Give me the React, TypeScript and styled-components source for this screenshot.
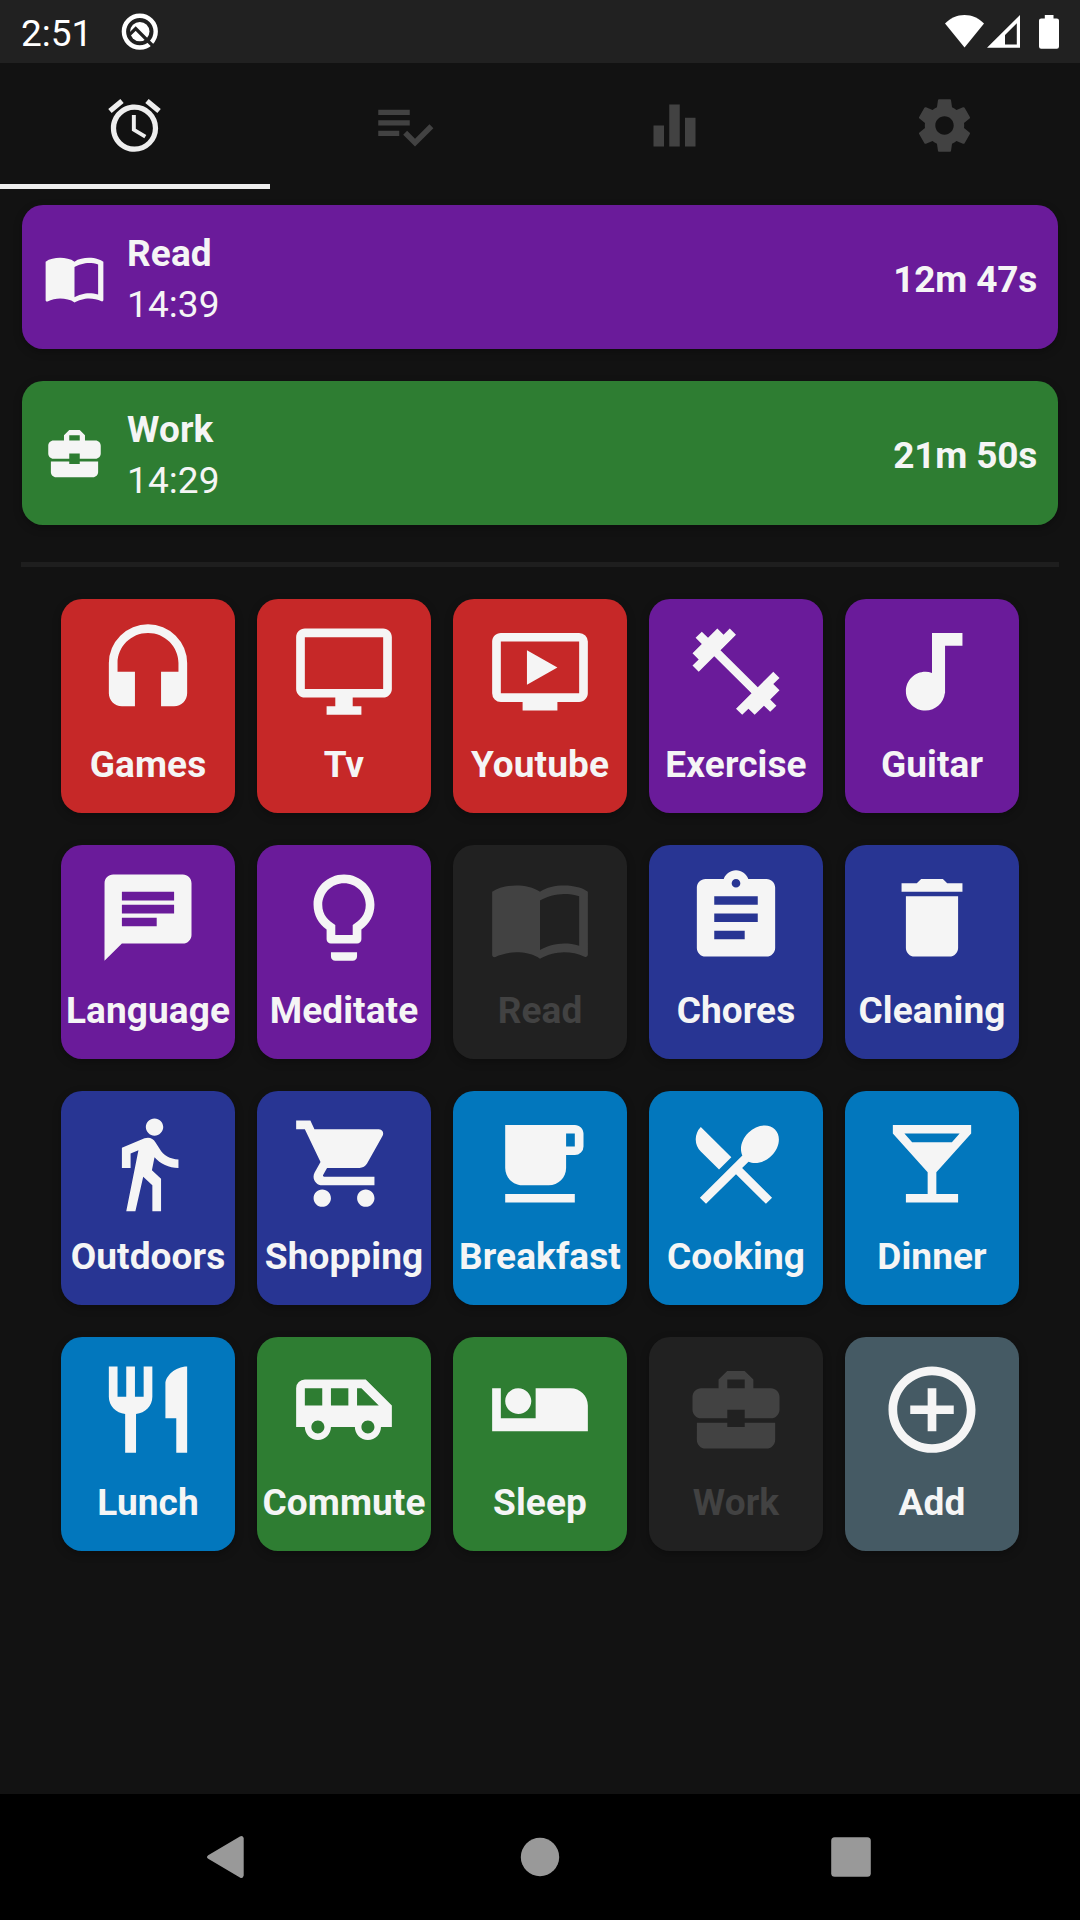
import React from "react";
import styled, { createGlobalStyle } from "styled-components";
import type { IconType } from "react-icons";
import {
  MdAccessAlarm,
  MdAddCircleOutline,
  MdAirlineSeatIndividualSuite,
  MdAirportShuttle,
  MdAssignment,
  MdAudiotrack,
  MdBusinessCenter,
  MdChat,
  MdDelete,
  MdDirectionsWalk,
  MdEqualizer,
  MdFitnessCenter,
  MdFreeBreakfast,
  MdHeadset,
  MdLightbulbOutline,
  MdLocalBar,
  MdOndemandVideo,
  MdRestaurant,
  MdRestaurantMenu,
  MdShoppingCart,
} from "react-icons/md";

const color = {
  background: "#121212",
  surface: "#212121",
  divider: "#1e1e1e",
  muted: "#424242",
  text: "#f5f5f5",
  tab: "#eeeeee",
  red: "#c62828",
  purple: "#6a1b9a",
  indigo: "#283593",
  blue: "#0277bd",
  green: "#2e7d32",
  slate: "#455a64",
};

const GlobalStyle = createGlobalStyle`
  *, *::before, *::after { box-sizing: border-box; }
  body {
    margin: 0;
    background: ${color.background};
    font-family: Roboto, "Liberation Sans", sans-serif;
  }
`;

const glyph = (d: string) =>
  ((props: { size?: number | string }) => (
    <svg viewBox="0 0 24 24" width={props.size} height={props.size} fill="currentColor">
      <path d={d} />
    </svg>
  )) as IconType;

const BookIcon = glyph(
  "M21 5c-1.11-.35-2.33-.5-3.5-.5-1.95 0-4.05.4-5.5 1.5-1.45-1.1-3.55-1.5-5.5-1.5S2.45 4.9 1 6v14.65c0 .25.25.5.5.5.1 0 .15-.05.25-.05C3.1 20.45 5.05 20 6.5 20c1.95 0 4.05.4 5.5 1.5 1.35-.85 3.8-1.5 5.5-1.5 1.65 0 3.35.3 4.75 1.05.1.05.15.05.25.05.25 0 .5-.25.5-.5V6c-.6-.45-1.25-.75-2-1zm0 13.5c-1.1-.35-2.3-.5-3.5-.5-1.7 0-4.15.65-5.5 1.5V8c1.35-.85 3.8-1.5 5.5-1.5 1.2 0 2.4.15 3.5.5v11.5z"
);

const MonitorIcon = glyph(
  "M21 2H3c-1.1 0-2 .9-2 2v12c0 1.1.9 2 2 2h7v2H8v2h8v-2h-2v-2h7c1.1 0 2-.9 2-2V4c0-1.1-.9-2-2-2zm0 14H3V4h18v12z"
);

const ChecklistIcon = glyph(
  "M14 10H2v2h12v-2zm0-4H2v2h12V6zM2 16h8v-2H2v2zm19.5-4.5L23 13l-6.99 7-4.51-4.5L13 14l3.01 3 5.49-5.5z"
);

const GearIcon = glyph(
  "M19.43 12.98c.04-.32.07-.64.07-.98s-.03-.66-.07-.98l2.11-1.65c.19-.15.24-.42.12-.64l-2-3.46c-.12-.22-.39-.3-.61-.22l-2.49 1c-.52-.4-1.08-.73-1.69-.98l-.38-2.65C14.46 2.18 14.25 2 14 2h-4c-.25 0-.46.18-.49.42l-.38 2.65c-.61.25-1.17.59-1.69.98l-2.49-1c-.23-.09-.49 0-.61.22l-2 3.46c-.13.22-.07.49.12.64l2.11 1.65c-.04.32-.07.65-.07.98s.03.66.07.98l-2.11 1.65c-.19.15-.24.42-.12.64l2 3.46c.12.22.39.3.61.22l2.49-1c.52.4 1.08.73 1.69.98l.38 2.65c.03.24.24.42.49.42h4c.25 0 .46-.18.49-.42l.38-2.65c.61-.25 1.17-.59 1.69-.98l2.49 1c.23.09.49 0 .61-.22l2-3.46c.12-.22.07-.49-.12-.64l-2.11-1.65zM12 15.5c-1.93 0-3.5-1.57-3.5-3.5s1.57-3.5 3.5-3.5 3.5 1.57 3.5 3.5-1.57 3.5-3.5 3.5z"
);

const Screen = styled.div`
  display: flex;
  flex-direction: column;
  width: 1080px;
  height: 1920px;
  overflow: hidden;
  background: ${color.background};
  color: ${color.text};
`;

const StatusBar = styled.header`
  display: flex;
  align-items: center;
  justify-content: space-between;
  flex: none;
  height: 63px;
  padding: 0 19px 0 21px;
  background: ${color.surface};
  color: #fff;
`;

const StatusGroup = styled.div`
  display: flex;
  align-items: center;

  svg { display: block; }
`;

const Clock = styled.span`
  width: 100px;
  padding-top: 4px;
  font-size: 37px;
  line-height: 44px;
`;

const TabBar = styled.nav`
  display: grid;
  grid-template-columns: repeat(4, 1fr);
  flex: none;
  height: 126px;
`;

const Tab = styled.button<{ $active: boolean }>`
  display: flex;
  align-items: center;
  justify-content: center;
  padding: 4px 1px 0 0;
  border: 0;
  border-bottom: 5px solid ${(p) => (p.$active ? color.tab : "transparent")};
  background: none;
  color: ${(p) => (p.$active ? color.tab : color.muted)};
`;

const TimerList = styled.section`
  display: flex;
  flex-direction: column;
  flex: none;
  gap: 32px;
  padding: 16px 22px 0;
`;

const TimerCard = styled.article<{ $color: string }>`
  display: flex;
  align-items: center;
  height: 144px;
  padding: 1px 21px 0;
  border-radius: 21px;
  background: ${(p) => p.$color};
  box-shadow: 0 3px 8px rgba(0, 0, 0, 0.28);
`;

const TimerText = styled.div`
  display: flex;
  flex-direction: column;
  flex: 1;
  padding: 3px 0 0 21px;
  font-size: 37px;
  line-height: 51px;
  letter-spacing: 0.1px;
`;

const Title = styled.span`
  font-weight: 700;
`;

const Elapsed = styled.span`
  padding-top: 4px;
  font-size: 37px;
  font-weight: 700;
  line-height: 44px;
  letter-spacing: -0.2px;
`;

const Divider = styled.hr`
  flex: none;
  width: 1038px;
  height: 5px;
  margin: 37px auto 32px;
  border: 0;
  background: ${color.divider};
`;

const ActivityGrid = styled.main`
  display: grid;
  grid-template-columns: repeat(5, 174px);
  grid-auto-rows: 214px;
  gap: 32px 22px;
  justify-content: center;
  flex: 1;
  align-content: start;
`;

const Tile = styled.button<{ $color: string; $off: boolean }>`
  display: flex;
  flex-direction: column;
  align-items: center;
  padding: 21px 0 0;
  border: 0;
  border-radius: 21px;
  background: ${(p) => p.$color};
  color: ${(p) => (p.$off ? color.muted : color.text)};
  box-shadow: 0 3px 8px rgba(0, 0, 0, 0.28);
  font-family: inherit;

  svg {
    flex: none;
    transform: scale(1.004, 0.995);
    transform-origin: top center;
  }
`;

const TileLabel = styled.span`
  margin-top: 19px;
  font-size: 37px;
  font-weight: 700;
  line-height: 44px;
  letter-spacing: 0.1px;
  white-space: nowrap;
`;

const SystemNav = styled.footer`
  display: grid;
  grid-template-columns: repeat(3, 311px);
  align-items: center;
  justify-content: center;
  justify-items: center;
  flex: none;
  height: 126px;
  background: #000;
  color: #999;
`;

const QLogo = () => (
  <svg width="38" height="38" viewBox="0 0 38 38">
    <circle cx="18.8" cy="18.6" r="15.9" fill="none" stroke="currentColor" strokeWidth="4.4" />
    <circle cx="18.8" cy="18.6" r="9.7" fill="currentColor" />
    <path d="M8 22.2 L14.7 15.5 L33 34" fill="none" stroke={color.surface} strokeWidth="3.2" />
  </svg>
);

const StatusIcons = () => (
  <svg width="116" height="36" viewBox="0 0 116 36" fill="currentColor">
    <path d="M0 9.6C5 4.4 12 1 19.5 1S34 4.4 39 9.6L19.5 33.6z" />
    <path fillRule="evenodd" d="M42 33.8L75 1v32.8zM60 30.5h11.8V9.2L60 21z" />
    <path d="M99.8 1h8.7v3.4h3.3a2.2 2.2 0 0 1 2.2 2.2v26a2.2 2.2 0 0 1-2.2 2.2H96.2a2.2 2.2 0 0 1-2.2-2.2v-26a2.2 2.2 0 0 1 2.2-2.2h3.6z" />
  </svg>
);

const BackButton = () => (
  <svg width="48" height="48" viewBox="0 0 48 48" fill="currentColor">
    <path d="M3.2 22.2 34.9 3.5Q37.7 2.2 38.7 5V42.5Q37.7 46.2 34.9 44.5L3.2 25.8Q.8 24 3.2 22.2z" />
  </svg>
);

const HomeButton = () => (
  <svg width="40" height="40" viewBox="0 0 40 40" fill="currentColor">
    <circle cx="20" cy="20" r="19.2" />
  </svg>
);

const RecentsButton = () => (
  <svg width="40" height="40" viewBox="0 0 40 40" fill="currentColor">
    <rect x=".2" y=".2" width="39.6" height="39.6" rx="3.5" />
  </svg>
);

const tabs: IconType[] = [MdAccessAlarm, ChecklistIcon, MdEqualizer, GearIcon];

const timers = [
  { name: "Read", start: "14:39", elapsed: "12m 47s", icon: BookIcon, color: color.purple },
  { name: "Work", start: "14:29", elapsed: "21m 50s", icon: MdBusinessCenter, color: color.green },
];

interface Activity {
  name: string;
  icon: IconType;
  color: string;
  running?: boolean;
}

const activities: Activity[] = [
  { name: "Games", icon: MdHeadset, color: color.red },
  { name: "Tv", icon: MonitorIcon, color: color.red },
  { name: "Youtube", icon: MdOndemandVideo, color: color.red },
  { name: "Exercise", icon: MdFitnessCenter, color: color.purple },
  { name: "Guitar", icon: MdAudiotrack, color: color.purple },
  { name: "Language", icon: MdChat, color: color.purple },
  { name: "Meditate", icon: MdLightbulbOutline, color: color.purple },
  { name: "Read", icon: BookIcon, color: color.surface, running: true },
  { name: "Chores", icon: MdAssignment, color: color.indigo },
  { name: "Cleaning", icon: MdDelete, color: color.indigo },
  { name: "Outdoors", icon: MdDirectionsWalk, color: color.indigo },
  { name: "Shopping", icon: MdShoppingCart, color: color.indigo },
  { name: "Breakfast", icon: MdFreeBreakfast, color: color.blue },
  { name: "Cooking", icon: MdRestaurantMenu, color: color.blue },
  { name: "Dinner", icon: MdLocalBar, color: color.blue },
  { name: "Lunch", icon: MdRestaurant, color: color.blue },
  { name: "Commute", icon: MdAirportShuttle, color: color.green },
  { name: "Sleep", icon: MdAirlineSeatIndividualSuite, color: color.green },
  { name: "Work", icon: MdBusinessCenter, color: color.surface, running: true },
  { name: "Add", icon: MdAddCircleOutline, color: color.slate },
];

export default function App() {
  return (
    <Screen>
      <GlobalStyle />
      <StatusBar>
        <StatusGroup>
          <Clock>2:51</Clock>
          <QLogo />
        </StatusGroup>
        <StatusGroup>
          <StatusIcons />
        </StatusGroup>
      </StatusBar>
      <TabBar>
        {tabs.map((Icon, i) => (
          <Tab key={i} $active={i === 0}>
            <Icon size={63} />
          </Tab>
        ))}
      </TabBar>
      <TimerList>
        {timers.map(({ icon: Icon, ...t }) => (
          <TimerCard key={t.name} $color={t.color}>
            <Icon size={63} />
            <TimerText>
              <Title>{t.name}</Title>
              <span>{t.start}</span>
            </TimerText>
            <Elapsed>{t.elapsed}</Elapsed>
          </TimerCard>
        ))}
      </TimerList>
      <Divider />
      <ActivityGrid>
        {activities.map(({ icon: Icon, ...a }) => (
          <Tile key={a.name} $color={a.color} $off={!!a.running}>
            <Icon size={104} />
            <TileLabel>{a.name}</TileLabel>
          </Tile>
        ))}
      </ActivityGrid>
      <SystemNav>
        <BackButton />
        <HomeButton />
        <RecentsButton />
      </SystemNav>
    </Screen>
  );
}
